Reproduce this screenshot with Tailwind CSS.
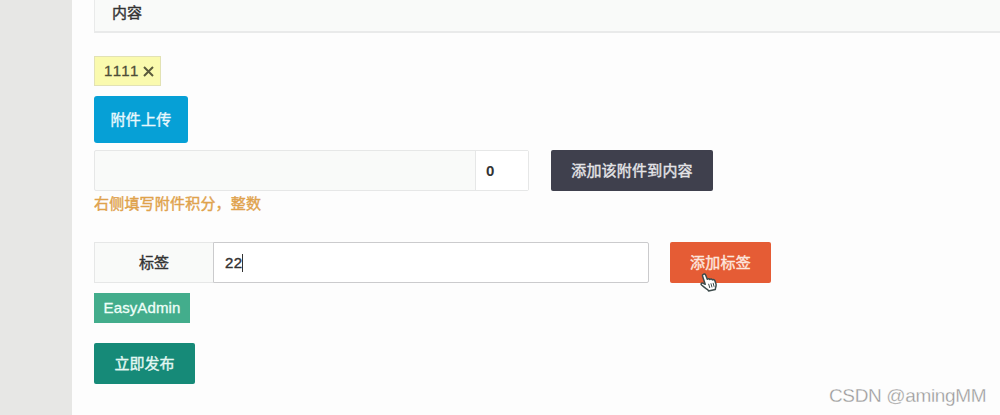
<!DOCTYPE html>
<html lang="zh-CN">
<head>
  <meta charset="UTF-8">
  <meta name="viewport" content="width=device-width, initial-scale=1.0">
  <title>发布内容</title>
  <script src="https://cdn.jsdelivr.net/npm/@tailwindcss/browser@4"></script>
  <style>
    body, input, button {
      font-family: "Liberation Sans", "Noto Sans CJK SC", sans-serif;
    }
  </style>
</head>
<body class="bg-[#e7e7e5] text-[15px] leading-5 text-[#333] overflow-hidden">
  <div class="relative ml-[72px] h-[415px] bg-[#fdfdfd] pl-[22px] overflow-hidden">

    <!-- 内容 -->
    <div class="h-[33px] pl-[17px] pt-[3px] bg-[#f9faf9] border-l border-b-2 border-[#e9eaea] [-webkit-text-stroke:0.4px]">内容</div>

    <!-- 已选标签 -->
    <div class="mt-[23px] w-[67px] h-[30px] flex items-center gap-[4px] pl-[9px] bg-[#fafaae] border border-[#e2e2b4] text-[#4d4d38] [-webkit-text-stroke:0.3px]">
      <span class="tracking-[0.3px] [font-kerning:none]">1111</span>
      <svg class="w-[11px] h-[11px]" viewBox="0 0 11 11" fill="none" stroke="#5a5a3c" stroke-width="2"><path d="M1 1L10 10M10 1L1 10"/></svg>
    </div>

    <button class="mt-[10px] w-[94px] h-[47px] block rounded-[3px] bg-[#06a0d6] text-[#e9f8fd] tracking-[0.2px] [-webkit-text-stroke:0.4px]">附件上传</button>

    <!-- 附件 -->
    <div class="mt-[7px] flex">
      <div class="w-[435px] h-[41px] flex rounded-xs border border-[#e6e7e7] bg-[#f9faf9]">
        <div class="w-[381px] border-r border-[#e6e7e7]"></div>
        <div class="flex-1 flex items-center pl-[10px] bg-white font-bold">0</div>
      </div>
      <button class="ml-[22px] w-[162px] h-[41px] rounded-xs bg-[#3f404d] text-[#e4e4e7] tracking-[0.2px] [-webkit-text-stroke:0.4px]">添加该附件到内容</button>
    </div>
    <p class="mt-[3px] text-[#dfa24c] tracking-[0.2px] [-webkit-text-stroke:0.4px]">右侧填写附件积分，整数</p>

    <!-- 标签 -->
    <div class="mt-[28px] flex">
      <div class="w-[119px] h-[41px] flex items-center justify-center bg-[#f9faf9] border border-r-0 border-[#e6e7e7] [-webkit-text-stroke:0.4px]">标签</div>
      <div class="w-[436px] h-[41px] flex items-center pl-[11px] bg-white border border-[#cbcbcd] rounded-r-xs [-webkit-text-stroke:0.4px]">
        <span class="tracking-[0.3px]">22</span><span class="w-px h-[18px] bg-[#333]"></span>
      </div>
      <button class="ml-[21px] w-[101px] h-[41px] rounded-xs bg-[#e55c35] text-[#fde6de] tracking-[0.2px] [-webkit-text-stroke:0.4px]">添加标签</button>
    </div>

    <div class="mt-[10px] w-[96px] h-[30px] flex items-center justify-center bg-[#43ad8c] text-[#effff9] tracking-[0.1px] [-webkit-text-stroke:0.3px]">EasyAdmin</div>

    <button class="mt-5 w-[101px] h-[41px] block rounded-xs bg-[#168a78] text-[#e3f7f2] [-webkit-text-stroke:0.4px]">立即发布</button>

    <!-- 手型光标 -->
    <svg class="absolute left-[628px] top-[273px] w-[18px] h-[19px]" viewBox="0 0 18 19" fill="#fff" stroke="#3d4b4b" stroke-width="1.5" stroke-linejoin="round" stroke-linecap="round">
      <path d="M3.2 1.3C4.1.6 5.2 1 5.6 2L7.3 6.3C8 5.6 9.3 5.7 9.8 6.5C10.7 5.8 12 6 12.4 6.9C13.3 6.3 14.5 6.7 14.9 7.8L16 11C16.4 12.5 15.8 13.8 15.5 15L15.3 16.4L8.5 18L7.7 16.6C6 15.8 3.7 13.8 1.6 12C.5 11 1.6 9.7 2.9 10.1L5.2 11.3L2.6 3.3C2.3 2.4 2.5 1.8 3.2 1.3Z"/>
      <path d="M8.7 11.2L9.7 14.6M11 10.7L11.9 14M13.2 10.3L14 13.4" stroke-width="1"/>
    </svg>

    <!-- 水印 -->
    <div class="absolute left-[757px] top-[384px] text-[19px] leading-6 tracking-[-0.35px] whitespace-nowrap text-[#999] [-webkit-text-stroke:0.3px_#fdfdfd]">CSDN @amingMM</div>
  </div>
</body>
</html>
